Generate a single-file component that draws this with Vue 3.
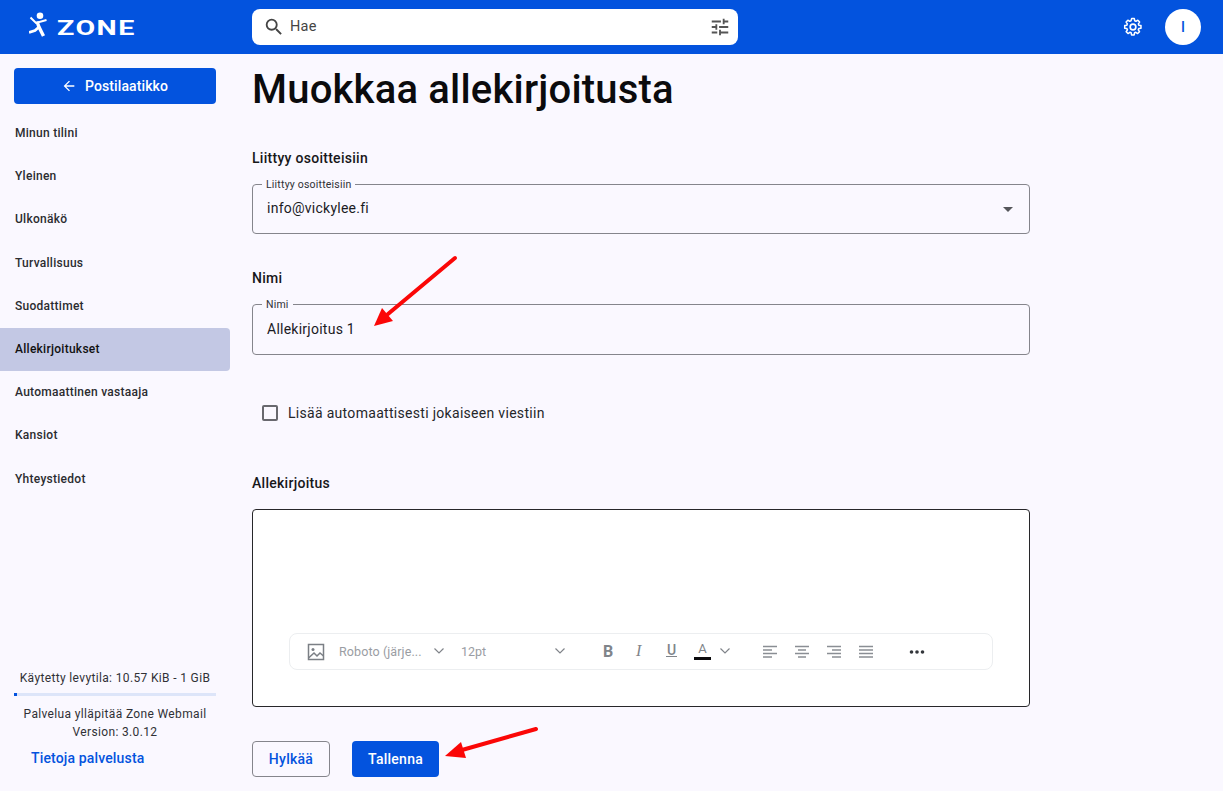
<script setup>
const nav = ['Minun tilini','Yleinen','Ulkonäkö','Turvallisuus','Suodattimet','Allekirjoitukset','Automaattinen vastaaja','Kansiot','Yhteystiedot']
const active = 'Allekirjoitukset'
</script>

<template>
  <div class="app">
    <header class="top">
      <div class="brand">
        <svg class="runner" width="20" height="26" viewBox="0 0 20 26" fill="none" stroke="#fff" stroke-linecap="butt">
          <circle cx="11" cy="3.800" r="3.300" fill="#fff" stroke="none"/>
          <path d="M1.500 5.500 L7 11 L17.500 8" stroke-width="2"/>
          <path d="M8 9.500 L10 15 L14.500 24" stroke-width="3.400"/>
          <path d="M10 15 L6 18.500 L0 20.500" stroke-width="2.800"/>
        </svg>
        <span class="word">ZONE</span>
      </div>
      <div class="search">
        <svg class="ic" width="22" height="22" viewBox="0 0 24 24" fill="#444"><path d="M15.5 14h-.79l-.28-.27A6.470 6.470 0 0 0 16 9.500 6.500 6.500 0 1 0 9.500 16c1.610 0 3.090-.59 4.230-1.570l.27.28v.79l5 4.990L20.490 19l-4.990-5zm-6 0C7.010 14 5 11.990 5 9.500S7.010 5 9.500 5 14 7.010 14 9.500 11.990 14 9.500 14z"/></svg>
        <span class="hae">Hae</span>
        <svg class="tune" width="22" height="22" viewBox="0 0 24 24" fill="#555"><path d="M3 17v2h6v-2H3zM3 5v2h10V5H3zm10 16v-2h8v-2h-8v-2h-2v6h2zM7 9v2H3v2h4v2h2V9H7zm14 4v-2H11v2h10zm-6-4h2V7h4V5h-4V3h-2v6z"/></svg>
      </div>
      <div class="top-right">
        <svg width="20" height="20" viewBox="0 0 24 24" fill="none" stroke="#fff" stroke-width="2" stroke-linejoin="round"><path d="M10.300 2.500h3.400l.5 2.800 1.700.8 2.400-1.500 2.300 2.500-1.600 2.300.6 1.700 2.800.6v3.400l-2.800.5-.7 1.700 1.600 2.400-2.400 2.300-2.400-1.600-1.700.7-.5 2.800h-3.400l-.5-2.800-1.700-.7-2.400 1.600-2.400-2.300 1.600-2.400-.7-1.700-2.800-.5v-3.400l2.800-.6.6-1.700-1.600-2.300 2.300-2.500 2.400 1.500 1.700-.8z" transform="translate(12 12) scale(.92) translate(-12 -13.500)"/><circle cx="12" cy="12" r="3.400"/></svg>
        <div class="avatar">I</div>
      </div>
    </header>

    <div class="body">
      <aside class="side">
        <button class="back">
          <svg width="16" height="16" viewBox="0 0 24 24" fill="#fff"><path d="M20 11H7.830l5.590-5.590L12 4l-8 8 8 8 1.410-1.410L7.830 13H20v-2z"/></svg>
          <span>Postilaatikko</span>
        </button>
        <nav class="nav">
          <a v-for="n in nav" :key="n" class="nav-item" :class="{ on: n === active }">{{ n }}</a>
        </nav>
        <div class="foot">
          <div class="usage">Käytetty levytila: 10.57 KiB - 1 GiB</div>
          <div class="bar"><div class="fill"></div></div>
          <div class="meta">Palvelua ylläpitää Zone Webmail</div>
          <div class="meta">Version: 3.0.12</div>
          <a class="about">Tietoja palvelusta</a>
        </div>
      </aside>

      <main class="main">
        <h1>Muokkaa allekirjoitusta</h1>

        <div class="lbl l1">Liittyy osoitteisiin</div>
        <fieldset class="field f1">
          <legend>Liittyy osoitteisiin</legend>
          <span>info@vickylee.fi</span>
          <i class="caret"></i>
        </fieldset>

        <div class="lbl l2">Nimi</div>
        <fieldset class="field f2">
          <legend>Nimi</legend>
          <span>Allekirjoitus 1</span>
        </fieldset>

        <label class="check">
          <i class="box"></i>
          <span>Lisää automaattisesti jokaiseen viestiin</span>
        </label>

        <div class="lbl l3">Allekirjoitus</div>
        <div class="editor">
          <div class="toolbar">
            <svg class="t-img" width="18" height="18" viewBox="0 0 18 18" fill="none" stroke="#7b7f85" stroke-width="1.500"><rect x="1.500" y="1.500" width="15" height="15"/><circle cx="6" cy="6.500" r="1.500" fill="#7b7f85" stroke="none"/><path d="M1.500 15 L7 10 L10 13 L13 10 L16.500 13"/></svg>
            <span class="t-font">Roboto (järje...</span>
            <svg class="chev c1" width="12" height="8" viewBox="0 0 12 8" fill="none" stroke="#80848a" stroke-width="1.200"><path d="M1.500 1.500 L6 6 L10.500 1.500"/></svg>
            <span class="t-size">12pt</span>
            <svg class="chev c2" width="12" height="8" viewBox="0 0 12 8" fill="none" stroke="#80848a" stroke-width="1.200"><path d="M1.500 1.500 L6 6 L10.500 1.500"/></svg>
            <b class="t-b">B</b>
            <i class="t-i">I</i>
            <span class="t-u">U</span>
            <span class="t-a">A</span>
            <svg class="chev c3" width="12" height="8" viewBox="0 0 12 8" fill="none" stroke="#80848a" stroke-width="1.200"><path d="M1.500 1.500 L6 6 L10.500 1.500"/></svg>
            <svg class="al a1" width="16" height="14" viewBox="0 0 16 14" stroke="#8a8e94" stroke-width="1.400"><path d="M1 1.500H15M1 5H10M1 8.500H15M1 12H10"/></svg>
            <svg class="al a2" width="16" height="14" viewBox="0 0 16 14" stroke="#8a8e94" stroke-width="1.400"><path d="M1 1.500H15M4 5H12M1 8.500H15M4 12H12"/></svg>
            <svg class="al a3" width="16" height="14" viewBox="0 0 16 14" stroke="#8a8e94" stroke-width="1.400"><path d="M1 1.500H15M6 5H15M1 8.500H15M6 12H15"/></svg>
            <svg class="al a4" width="16" height="14" viewBox="0 0 16 14" stroke="#8a8e94" stroke-width="1.400"><path d="M1 1.500H15M1 5H15M1 8.500H15M1 12H15"/></svg>
            <svg class="more" width="16" height="4" viewBox="0 0 16 4" fill="#33363b"><circle cx="2.500" cy="2" r="1.800"/><circle cx="8" cy="2" r="1.800"/><circle cx="13.500" cy="2" r="1.800"/></svg>
          </div>
        </div>

        <div class="actions">
          <button class="btn ghost">Hylkää</button>
          <button class="btn solid">Tallenna</button>
        </div>
      </main>
    </div>

    <svg class="arrows" width="1223" height="791" viewBox="0 0 1223 791">
      <g stroke="#fb0707" stroke-width="4" stroke-linecap="round" fill="none">
        <path d="M455 258 L388 314"/>
        <path d="M536 729 L462 750"/>
      </g>
      <path d="M374 326 L382 308 L393 321 Z" fill="#fb0707"/>
      <path d="M445 756 L461 742 L466 758 Z" fill="#fb0707"/>
    </svg>
  </div>
</template>

<style scoped>
.app { position: relative; width: 1223px; height: 791px; overflow: hidden; background: #faf8ff; font-family: Roboto, "Liberation Sans", sans-serif; color: #1b1b1f; display: flex; flex-direction: column; }
.top { height: 54px; flex: none; background: #0353de; display: flex; align-items: center; }
.brand { width: 252px; flex: none; display: flex; align-items: center; padding-left: 29px; box-sizing: border-box; gap: 8px; }
.runner { flex: none; margin-top: -4px; }
.word { display: inline-block; font-size: 20px; line-height: 20px; font-weight: 700; color: #fff; letter-spacing: 1px; transform: scaleX(1.430); transform-origin: left center; margin-top: 1px; }
.search { width: 486px; height: 36px; flex: none; background: #fff; border-radius: 8px; display: flex; align-items: center; padding: 0 7px 0 11px; box-sizing: border-box; }
.hae { font-size: 14.500px; color: #444; margin-left: 5px; letter-spacing: .2px; flex: 1; position: relative; top: -1px; }
.ic, .tune { flex: none; }
.top-right { margin-left: auto; display: flex; align-items: center; gap: 22px; padding-right: 22px; }
.avatar { width: 36px; height: 36px; border-radius: 50%; background: #fff; color: #0353de; display: flex; align-items: center; justify-content: center; font-size: 14px; font-weight: 500; }
.body { flex: 1; display: flex; min-height: 0; }
.side { width: 230px; flex: none; display: flex; flex-direction: column; padding-top: 14px; box-sizing: border-box; }
.back { margin: 0 14px; height: 36px; flex: none; border: 0; border-radius: 4px; background: #0353de; color: #fff; font: 500 14px Roboto, sans-serif; letter-spacing: .1px; display: flex; align-items: center; justify-content: center; gap: 8px; padding-left: 5px; }
.nav { margin-top: 8px; display: flex; flex-direction: column; }
.nav-item { height: 43.200px; line-height: 43.200px; padding-left: 15px; font-size: 12px; font-weight: 500; color: #2b2c30; border-radius: 0 4px 4px 0; letter-spacing: .27px; }
.nav-item.on { background: #c3c8e4; color: #111; }
.foot { margin-top: auto; padding: 0 14px 23px; text-align: center; font-size: 12px; color: #303136; letter-spacing: .35px; }
.usage { line-height: 16px; }
.bar { height: 3px; background: #dde5f9; margin: 7px 0 9px; }
.fill { width: 3px; height: 3px; background: #0353de; }
.meta { line-height: 18px; }
.about { display: block; text-align: left; margin: 7px 0 0 17px; font-size: 14px; font-weight: 500; color: #0353de; line-height: 20px; letter-spacing: .15px; }
.main { width: 778px; margin-left: 22px; flex: none; }
h1 { margin: 13px 0 0; font-size: 40px; line-height: 46px; font-weight: 500; color: #0b0b0d; letter-spacing: .2px; }
.lbl { font-size: 14px; font-weight: 500; line-height: 20px; color: #17171a; letter-spacing: .28px; }
.l1 { margin-top: 35px; margin-bottom: 11px; }
.l2 { margin-top: 34px; margin-bottom: 11px; }
.l3 { margin-top: 50px; }
.field { position: relative; margin: 0; min-width: 0; height: 56px; box-sizing: border-box; border: 1px solid #85858c; border-radius: 4px; padding: 0 14px; display: flex; align-items: center; font-size: 14px; color: #1b1b1f; letter-spacing: .25px; }
.f1 { height: 55px; }
.field span { position: relative; top: -4px; }
.f2 span { top: -3px; }
.field legend { font-size: 10.500px; line-height: 11px; padding: 0 4px; margin-left: -5px; color: #303136; letter-spacing: .2px; }
.caret { position: absolute; right: 16px; top: 17px; width: 0; height: 0; border-left: 5px solid transparent; border-right: 5px solid transparent; border-top: 5px solid #55565b; }
.check { display: flex; align-items: center; margin: 48px 0 0 10px; height: 20px; font-size: 14px; color: #25262a; letter-spacing: .3px; }
.box { width: 12px; height: 12px; border: 2px solid #68686e; border-radius: 2px; margin-right: 10px; flex: none; }
.editor { position: relative; margin-top: 16px; height: 198px; box-sizing: border-box; background: #fff; border: 1px solid #27272a; border-radius: 4px; }
.toolbar { position: absolute; left: 36px; top: 123px; width: 704px; height: 37px; box-sizing: border-box; border: 1px solid #eceef0; border-radius: 8px; color: #8a8e94; }
.toolbar > * { position: absolute; }
.t-img { left: 17px; top: 9px; }
.t-font { left: 49px; top: 10px; font-size: 12.500px; color: #9a9da3; letter-spacing: .1px; white-space: nowrap; }
.c1 { left: 143px; top: 13px; }
.t-size { left: 171px; top: 10px; font-size: 12.500px; color: #9a9da3; }
.c2 { left: 264px; top: 13px; }
.t-b { left: 313px; top: 8px; font-size: 16px; font-weight: 700; color: #80848a; }
.t-i { left: 346px; top: 8px; font: italic 400 16px "Liberation Serif", serif; color: #80848a; }
.t-u { left: 376px; top: 8px; font-size: 14px; line-height: 16px; font-weight: 500; color: #80848a; border-bottom: 1.500px solid #80848a; padding: 0 1px; height: 14px; }
.t-a { left: 404px; top: 7px; font-size: 13px; line-height: 16px; width: 17px; text-align: center; border-bottom: 3px solid #0b0b0d; color: #80848a; height: 16px; }
.c3 { left: 429px; top: 13px; }
.al { top: 11px; }
.a1 { left: 472px; } .a2 { left: 504px; } .a3 { left: 536px; } .a4 { left: 568px; }
.more { left: 619px; top: 16px; }
.actions { display: flex; gap: 22px; margin-top: 34px; }
.btn { height: 36px; border-radius: 4px; font: 500 14px Roboto, sans-serif; letter-spacing: .25px; box-sizing: border-box; }
.ghost { width: 78px; background: transparent; border: 1px solid #85858c; color: #0353de; }
.solid { width: 87px; background: #0353de; border: 0; color: #fff; }
.arrows { position: absolute; left: 0; top: 0; pointer-events: none; }
</style>
